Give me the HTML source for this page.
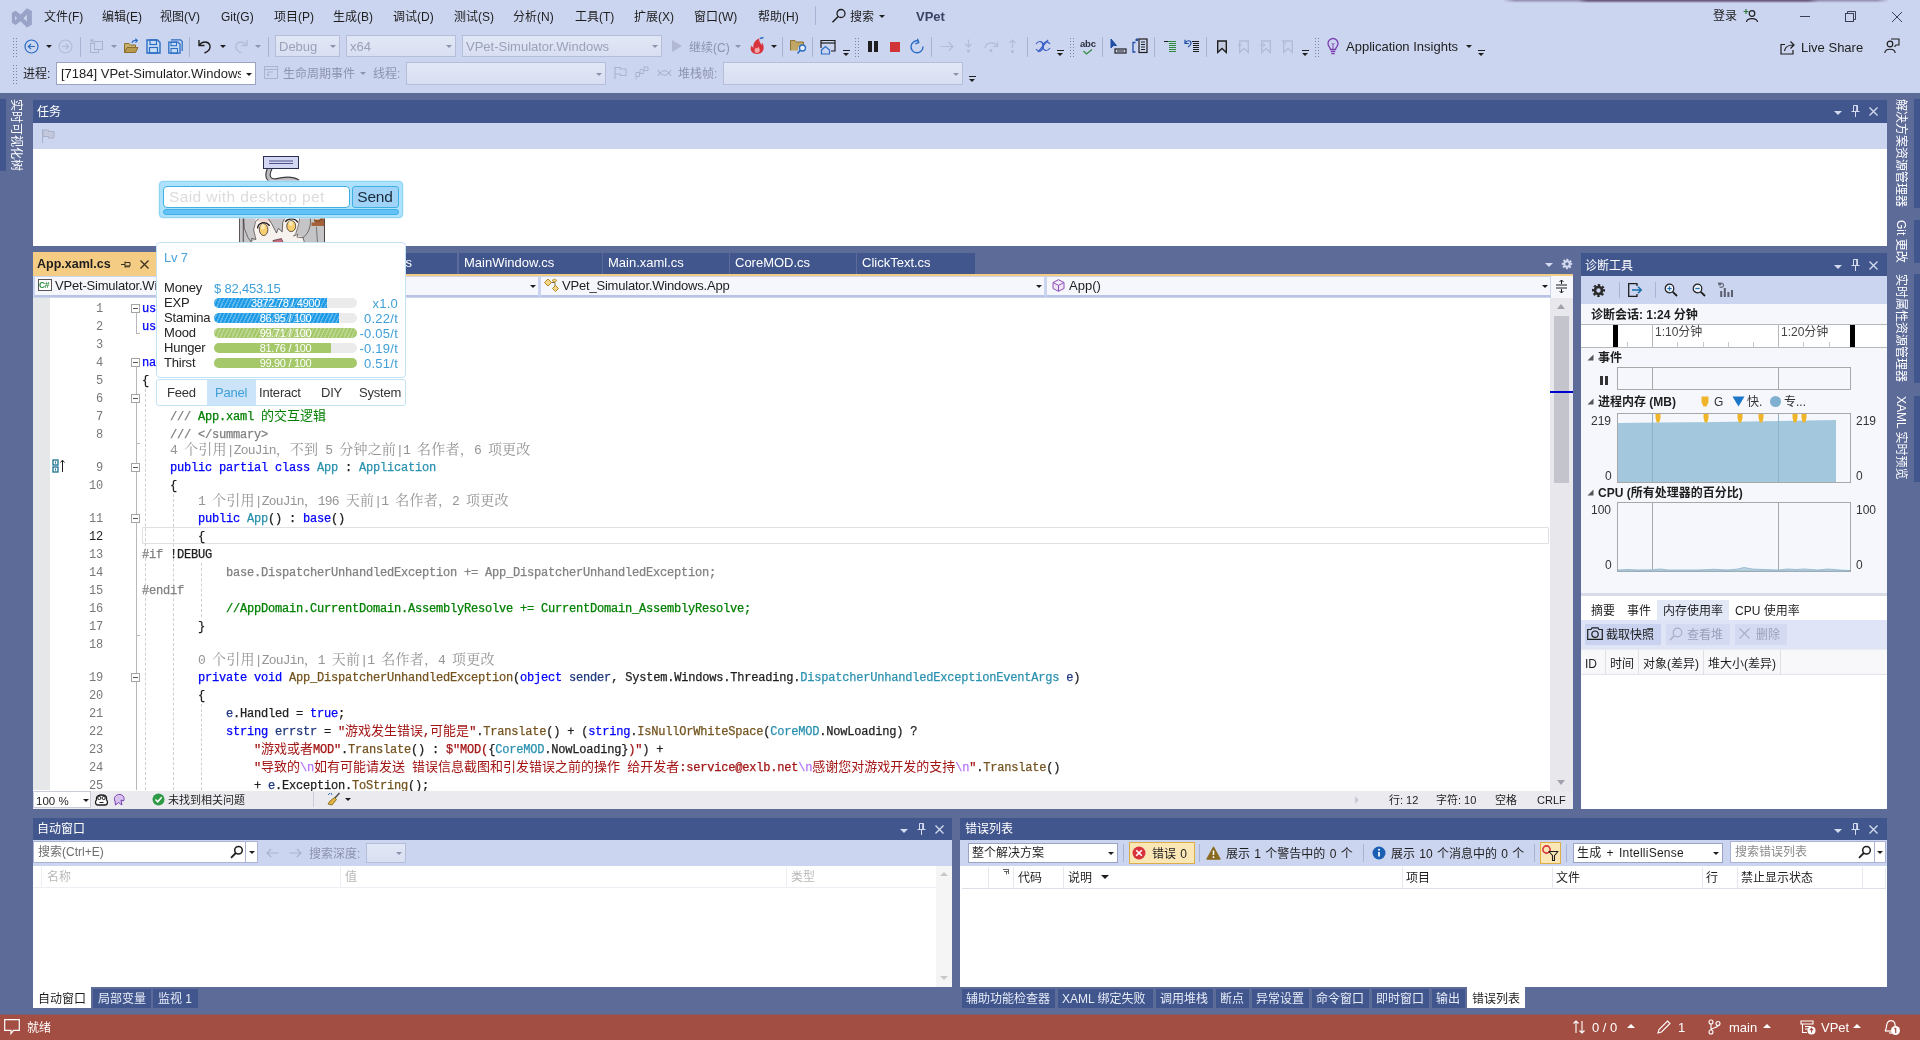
<!DOCTYPE html>
<html lang="zh-CN">
<head>
<meta charset="utf-8">
<title>VPet - Microsoft Visual Studio</title>
<style>
*{box-sizing:border-box;margin:0;padding:0}
html,body{width:1920px;height:1040px;overflow:hidden}
body{will-change:transform}
body{position:relative;background:#5d6b99;font-family:"Liberation Sans","Noto Sans CJK SC",sans-serif;font-size:12px;color:#1e1e1e;line-height:1}
.abs,.t{position:absolute}
.t{white-space:nowrap;line-height:16px;height:16px}
#top{position:absolute;left:0;top:0;width:1920px;height:93px;background:#ccd5f0}
.w{color:#fff}
.g{color:#8c93ad}
.ttl{position:absolute;background:#40568d;color:#fff}
.lt{position:absolute;background:#ccd5f0}
.wh{position:absolute;background:#fff}
.combo{position:absolute;background:#fff;border:1px solid #98a3c6;height:22px}
.combo.dis{background:linear-gradient(#e2e7f5,#d9dff2);border-color:#b4bedb}
.arr{position:absolute;width:0;height:0;border-left:3px solid transparent;border-right:3px solid transparent;border-top:3px solid #1e1e1e}
.arr.g{border-top-color:#8c93ad}
.arr.w{border-top-color:#d6dcf0}
.sep{position:absolute;width:1px;background:#a9b3d3}
.grip{position:absolute;width:3px;background-image:radial-gradient(circle,#7b84a8 0.7px,transparent 0.9px);background-size:3px 3px}
svg{position:absolute;overflow:visible}
/* code */
#code{position:absolute;left:33px;top:298px;width:1517px;height:493px;background:#fff;overflow:hidden;font-family:"Liberation Mono","Noto Sans CJK SC",monospace;font-size:12px;letter-spacing:-0.2px}
.ln{margin-top:1px;position:absolute;left:0;width:70px;text-align:right;color:#787878;height:18px;line-height:18px;white-space:pre}
.cl{-webkit-text-stroke:0.25px;margin-top:1px;position:absolute;left:109px;height:18px;line-height:18px;white-space:pre;color:#1e1e1e}
.lens{margin-top:2.5px;position:absolute;height:15px;line-height:15px;white-space:pre;color:#959595;font-family:"Liberation Mono","Noto Serif CJK SC",monospace;font-size:12px;letter-spacing:0}
.k{color:#0000ff}.ty{color:#2b91af}.cm{color:#008000}.gr{color:#808080}.st{color:#a31515}.fn{color:#74531f}.es{color:#b776fb}.lv{color:#1f377f}
.fold{position:absolute;width:9px;height:9px;border:1px solid #a5a5a5;background:#fff}
.fold:before{content:"";position:absolute;left:1px;top:3px;width:5px;height:1px;background:#555}
.cj{font-family:"Noto Sans CJK SC",sans-serif;font-size:13px;letter-spacing:0;line-height:0;-webkit-text-stroke:0}
.lens{font-size:13px;letter-spacing:-0.8px}
.lc{font-family:"Noto Serif CJK SC",serif;font-size:14px;letter-spacing:0.2px;line-height:0}
</style>
</head>
<body>
<div id="top"></div>
<!--MENU-->
<svg style="left:0;top:0" width="40" height="35" viewBox="0 0 640 560"><path d="M430 130 L510 175 V395 L430 440 L330 340 L250 400 L190 365 V205 L250 170 L330 230 Z M240 255 V325 L275 290 Z M430 235 L375 290 L430 345 Z" fill="#98a3c7" fill-rule="evenodd"/></svg>
<div class="t" style="left:44px;top:9px">文件(F)</div>
<div class="t" style="left:102px;top:9px">编辑(E)</div>
<div class="t" style="left:160px;top:9px">视图(V)</div>
<div class="t" style="left:221px;top:9px">Git(G)</div>
<div class="t" style="left:274px;top:9px">项目(P)</div>
<div class="t" style="left:333px;top:9px">生成(B)</div>
<div class="t" style="left:393px;top:9px">调试(D)</div>
<div class="t" style="left:454px;top:9px">测试(S)</div>
<div class="t" style="left:513px;top:9px">分析(N)</div>
<div class="t" style="left:575px;top:9px">工具(T)</div>
<div class="t" style="left:634px;top:9px">扩展(X)</div>
<div class="t" style="left:694px;top:9px">窗口(W)</div>
<div class="t" style="left:758px;top:9px">帮助(H)</div>
<div class="sep" style="left:815px;top:6px;height:19px"></div>
<svg style="left:831px;top:8px" width="16" height="16" viewBox="0 0 16 16"><circle cx="10" cy="5.5" r="4" fill="none" stroke="#1e1e1e" stroke-width="1.3"/><path d="M7.2 8.5 L1.5 14.2" stroke="#1e1e1e" stroke-width="1.5"/></svg>
<div class="t" style="left:850px;top:9px">搜索</div><div class="arr" style="left:879px;top:15px"></div>
<div class="t" style="left:916px;top:9px;font-weight:bold;color:#3b4263;font-size:13px">VPet</div>
<div class="t" style="left:1713px;top:8px">登录</div>
<svg style="left:1743px;top:8px" width="16" height="16" viewBox="0 0 16 16"><circle cx="9" cy="5.5" r="2.8" fill="none" stroke="#1e1e1e" stroke-width="1.2"/><path d="M3.5 14 C4 9.5 14 9.5 14.5 14" fill="none" stroke="#1e1e1e" stroke-width="1.2"/><path d="M3 1 V6 M0.5 3.5 H5.5" stroke="#2a7a3a" stroke-width="1.2"/></svg>
<div class="abs" style="left:1800px;top:16px;width:10px;height:1px;background:#3a3f55"></div>
<svg style="left:1845px;top:11px" width="12" height="12" viewBox="0 0 12 12"><rect x="0.5" y="2.5" width="8" height="8" fill="none" stroke="#3a3f55"/><path d="M2.5 2.5 V0.5 H10.5 V8.5 H8.5" fill="none" stroke="#3a3f55"/></svg>
<svg style="left:1892px;top:12px" width="10" height="10" viewBox="0 0 10 10"><path d="M0 0 L10 10 M10 0 L0 10" stroke="#3a3f55" stroke-width="1"/></svg>
<div class="abs" style="left:1503px;top:0;width:386px;height:3px;background:linear-gradient(to right,rgba(120,110,150,0),rgba(120,110,150,.75) 3%,rgba(120,110,150,.75) 97%,rgba(120,110,150,0));-webkit-mask-image:linear-gradient(#000,transparent);mask-image:linear-gradient(#000,transparent)"></div><div class="abs" style="left:1578px;top:0;width:240px;height:3px;background:linear-gradient(to right,rgba(95,75,110,0),rgba(95,75,110,.9) 4%,rgba(95,75,110,.9) 96%,rgba(95,75,110,0));-webkit-mask-image:linear-gradient(#000,transparent);mask-image:linear-gradient(#000,transparent)"></div>
<!--TOOLBAR1-->
<div class="grip" style="left:12px;top:37px;height:20px;width:6px"></div>
<svg style="left:24px;top:39px" width="15" height="15" viewBox="0 0 15 15"><circle cx="7.5" cy="7.5" r="6.5" fill="none" stroke="#2a6dc4" stroke-width="1.2"/><path d="M11 7.5 H4.5 M7 4.8 L4.3 7.5 L7 10.2" fill="none" stroke="#2a6dc4" stroke-width="1.2"/></svg>
<div class="arr" style="left:46px;top:45px"></div>
<svg style="left:58px;top:39px" width="15" height="15" viewBox="0 0 15 15"><circle cx="7.5" cy="7.5" r="6.5" fill="none" stroke="#b3bbd6" stroke-width="1.2"/><path d="M4 7.5 H10.5 M8 4.8 L10.7 7.5 L8 10.2" fill="none" stroke="#b3bbd6" stroke-width="1.2"/></svg>
<div class="sep" style="left:80px;top:37px;height:20px"></div>
<svg style="left:89px;top:38px" width="16" height="16" viewBox="0 0 16 16"><rect x="1.5" y="5.5" width="8" height="9" fill="none" stroke="#aab3d0"/><rect x="5.5" y="3.5" width="8" height="8" fill="#ccd5f0" stroke="#aab3d0"/><path d="M3 0.5 V5 M0.8 2.7 H5.2 M1.4 1.1 L4.6 4.3 M4.6 1.1 L1.4 4.3" stroke="#aab3d0" stroke-width="0.8"/></svg>
<div class="arr g" style="left:111px;top:45px"></div>
<svg style="left:123px;top:38px" width="17" height="16" viewBox="0 0 17 16"><path d="M1.5 14.5 V5.5 H6 L7.5 7 H12.5 V9" fill="#c9b06a" stroke="#8a6f2f"/><path d="M1.5 14.5 L4 9.5 H15 L12.5 14.5 Z" fill="#b89a4e" stroke="#8a6f2f"/><path d="M9 5 C9.5 2.5 12 2 14 2.5 M12.3 0.8 L14.3 2.6 L12.5 4.6" fill="none" stroke="#2a6dc4" stroke-width="1.2"/></svg>
<svg style="left:146px;top:39px" width="15" height="15" viewBox="0 0 15 15"><path d="M1 1 H11.5 L14 3.5 V14 H1 Z" fill="#c9ddf5" stroke="#2a6dc4" stroke-width="1.4"/><rect x="4" y="1" width="6.5" height="4.5" fill="none" stroke="#2a6dc4" stroke-width="1.2"/><rect x="3.5" y="8.5" width="8" height="5.5" fill="none" stroke="#2a6dc4" stroke-width="1.2"/></svg>
<svg style="left:168px;top:39px" width="15" height="15" viewBox="0 0 15 15"><path d="M3 0.8 H12.5 L14.2 2.5 V12" fill="none" stroke="#2a6dc4" stroke-width="1.2"/><path d="M0.8 3.2 H10 L12 5.2 V14.2 H0.8 Z" fill="#c9ddf5" stroke="#2a6dc4" stroke-width="1.3"/><rect x="3" y="3.2" width="5.5" height="3.5" fill="none" stroke="#2a6dc4" stroke-width="1.1"/><rect x="3" y="9.5" width="6.5" height="4.7" fill="none" stroke="#2a6dc4" stroke-width="1.1"/></svg>
<div class="sep" style="left:189px;top:37px;height:20px"></div>
<svg style="left:197px;top:39px" width="16" height="15" viewBox="0 0 16 15"><path d="M2 1 V6.5 H7.5" fill="none" stroke="#1e1e1e" stroke-width="1.4"/><path d="M2.3 6.2 C5 2 11 2 12.8 6 C14 9.5 11 12.5 7.5 14" fill="none" stroke="#1e1e1e" stroke-width="1.4"/></svg>
<div class="arr" style="left:220px;top:45px"></div>
<svg style="left:233px;top:39px" width="16" height="15" viewBox="0 0 16 15"><path d="M14 1 V6.5 H8.5" fill="none" stroke="#b3bbd6" stroke-width="1.3"/><path d="M13.7 6.2 C11 2 5 2 3.2 6 C2 9.5 5 12.5 8.5 14" fill="none" stroke="#b3bbd6" stroke-width="1.3"/></svg>
<div class="arr g" style="left:255px;top:45px"></div>
<div class="sep" style="left:268px;top:37px;height:20px"></div>
<div class="combo dis" style="left:275px;top:35px;width:65px;height:22px"><div class="t" style="left:3px;top:3px;font-size:13px;color:#9aa1bb">Debug</div><div class="arr g" style="left:54px;top:9px"></div></div>
<div class="combo dis" style="left:346px;top:35px;width:110px;height:22px"><div class="t" style="left:3px;top:3px;font-size:13px;color:#9aa1bb">x64</div><div class="arr g" style="left:99px;top:9px"></div></div>
<div class="combo dis" style="left:462px;top:35px;width:200px;height:22px"><div class="t" style="left:3px;top:3px;font-size:13px;color:#9aa1bb">VPet-Simulator.Windows</div><div class="arr g" style="left:189px;top:9px"></div></div>
<svg style="left:671px;top:39px" width="12" height="14" viewBox="0 0 12 14"><path d="M1 1 L11 7 L1 13 Z" fill="#b0b8d4"/></svg>
<div class="t g" style="left:689px;top:40px">继续(C)</div><div class="arr g" style="left:735px;top:45px"></div>
<svg style="left:748px;top:37px" width="18" height="18" viewBox="0 0 18 18"><path d="M9 17 C3 17 1.5 12 3.5 8.5 C4 10 5 10.5 5.5 10.5 C4.5 6 8 3 11.5 1 C10.5 4 12 5.5 13.5 8 C14 7 14 6 13.8 5.2 C17 9 16.5 17 9 17 Z" fill="#d8323c"/><path d="M9 16 C6 16 6 12.5 8 10.5 C8.5 12 10 11.5 10 9.5 C12.5 12 12.5 16 9 16 Z" fill="#f4a8a8"/><path d="M12 1.5 L15.5 0.5" stroke="#2a6dc4" stroke-width="1.5"/></svg>
<div class="arr" style="left:771px;top:45px"></div>
<div class="sep" style="left:782px;top:37px;height:20px"></div>
<svg style="left:790px;top:39px" width="18" height="16" viewBox="0 0 18 16"><path d="M0.5 11.5 V1.5 H5 L6.5 3 H13.5 V6" fill="#bfa664" stroke="#8a7238"/><path d="M0.5 11.5 H8 V5 H13.5" fill="#bfa664" stroke="#8a7238" stroke-width="0"/><circle cx="12.5" cy="9" r="3" fill="#e8eefc" stroke="#2a6dc4" stroke-width="1.3"/><path d="M10.3 11.2 L7.5 14.5" stroke="#2a6dc4" stroke-width="1.6"/></svg>
<div class="sep" style="left:812px;top:37px;height:20px"></div>
<svg style="left:820px;top:39px" width="17" height="16" viewBox="0 0 17 16"><path d="M1 9 V1.5 H15 V12 H11" fill="none" stroke="#1e1e1e" stroke-width="1.2"/><path d="M1 4 H15" stroke="#1e1e1e" stroke-width="1.2"/><path d="M1.5 11 L5.5 7.5 L9.5 11 V15 H1.5 Z" fill="none" stroke="#2a6dc4" stroke-width="1.2"/></svg>
<div class="abs" style="left:843px;top:50px;width:7px;height:1px;background:#1e1e1e"></div><div class="arr" style="left:843px;top:53px;border-left-width:3.5px;border-right-width:3.5px"></div>
<div class="grip" style="left:854px;top:37px;height:20px;width:6px"></div>
<div class="abs" style="left:868px;top:41px;width:4px;height:11px;background:#1e1e1e"></div><div class="abs" style="left:874px;top:41px;width:4px;height:11px;background:#1e1e1e"></div>
<div class="abs" style="left:890px;top:42px;width:10px;height:10px;background:#d13438"></div>
<svg style="left:909px;top:38px" width="16" height="17" viewBox="0 0 16 17"><path d="M9.5 3 A6 6 0 1 0 14 8.5" fill="none" stroke="#2a6dc4" stroke-width="1.4"/><path d="M9.8 0.5 V4.5 H6" fill="none" stroke="#2a6dc4" stroke-width="1.3" transform="rotate(-20 9.8 4.5)"/></svg>
<div class="sep" style="left:931px;top:37px;height:20px"></div>
<svg style="left:940px;top:40px" width="15" height="13" viewBox="0 0 15 13"><path d="M0.5 6.5 H13 M8.5 2 L13 6.5 L8.5 11" fill="none" stroke="#b3bbd6" stroke-width="1.2"/></svg>
<svg style="left:963px;top:39px" width="11" height="15" viewBox="0 0 11 15"><path d="M5.5 0.5 V8 M2.5 5 L5.5 8 L8.5 5" fill="none" stroke="#b3bbd6" stroke-width="1.2"/><circle cx="5.5" cy="12" r="1.5" fill="#b3bbd6"/></svg>
<svg style="left:984px;top:40px" width="15" height="13" viewBox="0 0 15 13"><path d="M1 8 C2 2 10 1 13 6 M13.5 2 V6.5 H9" fill="none" stroke="#b3bbd6" stroke-width="1.2"/><circle cx="7" cy="10.5" r="1.5" fill="#b3bbd6"/></svg>
<svg style="left:1007px;top:39px" width="11" height="15" viewBox="0 0 11 15"><path d="M5.5 9 V1 M2.5 4 L5.5 1 L8.5 4" fill="none" stroke="#b3bbd6" stroke-width="1.2"/><circle cx="5.5" cy="12.5" r="1.5" fill="#b3bbd6"/></svg>
<div class="sep" style="left:1027px;top:37px;height:20px"></div>
<svg style="left:1035px;top:39px" width="16" height="15" viewBox="0 0 16 15"><path d="M1 5 C4 1 8 2 8 7 C8 12 12 13 15 9" fill="none" stroke="#3a5fc8" stroke-width="1.2"/><path d="M1 10 C4 14 8 12 8 7 C8 3 12 1 15 5" fill="none" stroke="#3a5fc8" stroke-width="1.2"/><path d="M3 13 L13 1" stroke="#3a5fc8" stroke-width="1.2"/></svg>
<div class="abs" style="left:1057px;top:50px;width:7px;height:1px;background:#1e1e1e"></div><div class="arr" style="left:1057px;top:53px;border-left-width:3.5px;border-right-width:3.5px"></div>
<div class="grip" style="left:1069px;top:37px;height:20px;width:6px"></div>
<div class="t" style="left:1080px;top:36px;font-size:9.5px;font-weight:bold;letter-spacing:-0.2px;color:#2a2d3e">abc</div><svg style="left:1083px;top:49px" width="10" height="6" viewBox="0 0 10 6"><path d="M0.5 2 L3.5 5 L9 0.5" fill="none" stroke="#2f8a3d" stroke-width="1.2"/></svg>
<div class="sep" style="left:1102px;top:37px;height:20px"></div>
<svg style="left:1110px;top:38px" width="17" height="16" viewBox="0 0 17 16"><path d="M1 1 L1 10 L3.5 7.5 L6.5 7.5 Z" fill="#1f4ea3" stroke="#1f4ea3"/><rect x="5" y="11" width="11" height="4" fill="none" stroke="#1e1e1e" stroke-width="1.2"/><path d="M7 13 H14" stroke="#1e1e1e"/></svg>
<svg style="left:1132px;top:38px" width="17" height="16" viewBox="0 0 17 16"><path d="M3.5 4.5 H1 V14 H3.5" fill="none" stroke="#1f4ea3" stroke-width="1.3"/><path d="M4 1 L6 3 M6 1 L4 3 L4 1 H6.5" fill="none" stroke="#1f4ea3" stroke-width="1"/><rect x="7" y="1" width="8" height="13.5" fill="none" stroke="#1e1e1e" stroke-width="1.2"/><path d="M9 4 H13 M9 6.5 H13 M9 9 H13 M9 11.5 H13" stroke="#1e1e1e"/></svg>
<div class="sep" style="left:1154px;top:37px;height:20px"></div>
<svg style="left:1163px;top:40px" width="14" height="13" viewBox="0 0 14 13" shape-rendering="crispEdges"><path d="M1 1.500 H5" stroke="#1e1e1e" stroke-width="1"/><path d="M5 1.500 H13 M6 3.500 H13 M6 5.500 H13 M6 7.500 H13 M6 9.500 H13 M6 11.500 H13" stroke="#2f8a3d" stroke-width="1"/></svg>
<svg style="left:1184px;top:39px" width="16" height="14" viewBox="0 0 16 14"><path d="M8 2.500 H15 M9 4.500 H15 M9 6.500 H15 M9 8.500 H15 M9 10.500 H15 M9 12.500 H15" stroke="#1e1e1e" stroke-width="1" shape-rendering="crispEdges"/><path d="M1 0.800 V4.500 H4.800 M1.500 4 C2.500 1 7 1 7 4.200 C7 6.200 5.500 7 4 8" fill="none" stroke="#1f4ea3" stroke-width="1.200"/></svg>
<div class="sep" style="left:1206px;top:37px;height:20px"></div>
<svg style="left:1216px;top:40px" width="13" height="14" viewBox="0 0 13 14"><path d="M1.700 1 H10.300 V12.500 L6 8.500 L1.700 12.500 Z" fill="#c3cbe0" stroke="#1e1e1e" stroke-width="1.400"/></svg>
<svg style="left:1238px;top:40px" width="13" height="14" viewBox="0 0 13 14"><path d="M1.7 1 H10.3 V12.5 L6 8.5 L1.7 12.5 Z" fill="none" stroke="#b3bbd6" stroke-width="1.4"/><path d="M0 5 H4 M2 3 L0 5 L2 7" fill="none" stroke="#b3bbd6"/></svg>
<svg style="left:1260px;top:40px" width="13" height="14" viewBox="0 0 13 14"><path d="M1.7 1 H10.3 V12.5 L6 8.5 L1.7 12.5 Z" fill="none" stroke="#b3bbd6" stroke-width="1.4"/><path d="M0 5 H5 M3 3 L5 5 L3 7" fill="none" stroke="#b3bbd6"/></svg>
<svg style="left:1282px;top:40px" width="13" height="14" viewBox="0 0 13 14"><path d="M1.7 1 H10.3 V12.5 L6 8.5 L1.7 12.5 Z" fill="none" stroke="#b3bbd6" stroke-width="1.4"/><path d="M-0.5 0 L4 4" stroke="#b3bbd6"/></svg>
<div class="abs" style="left:1302px;top:50px;width:7px;height:1px;background:#1e1e1e"></div><div class="arr" style="left:1302px;top:53px;border-left-width:3.5px;border-right-width:3.5px"></div>
<div class="grip" style="left:1314px;top:37px;height:20px;width:6px"></div>
<svg style="left:1327px;top:38px" width="12" height="17" viewBox="0 0 12 17"><path d="M3.5 11.5 C3.5 9.5 1 8.5 1 5.5 A5 5 0 0 1 11 5.5 C11 8.5 8.5 9.5 8.5 11.5 Z" fill="none" stroke="#7a3fb0" stroke-width="1.3"/><path d="M3.8 13.5 H8.2 M4.3 15.7 H7.7" stroke="#7a3fb0" stroke-width="1.3"/><path d="M6 11 V6 M4.5 5 L6 6.5 L7.5 5" fill="none" stroke="#7a3fb0" stroke-width="0.9"/></svg>
<div class="t" style="left:1346px;top:39px;font-size:13px">Application Insights</div><div class="arr" style="left:1466px;top:45px"></div>
<div class="abs" style="left:1478px;top:50px;width:7px;height:1px;background:#1e1e1e"></div><div class="arr" style="left:1478px;top:53px;border-left-width:3.5px;border-right-width:3.5px"></div>
<svg style="left:1780px;top:40px" width="15" height="15" viewBox="0 0 15 15"><path d="M5 4.5 H1 V14 H13 V10" fill="none" stroke="#1e1e1e" stroke-width="1.2"/><path d="M4.5 11 C5 7 8 5 13.5 5 M10.5 1.5 L14 5 L10.5 8.5" fill="none" stroke="#1e1e1e" stroke-width="1.2"/></svg>
<div class="t" style="left:1801px;top:40px;font-size:13px">Live Share</div>
<svg style="left:1884px;top:38px" width="16" height="16" viewBox="0 0 16 16"><circle cx="6" cy="6" r="2.8" fill="none" stroke="#1e1e1e" stroke-width="1.2"/><path d="M0.8 15 C1.2 10 10.8 10 11.2 15" fill="none" stroke="#1e1e1e" stroke-width="1.2"/><path d="M7 1 H15 V7 H12 L10.5 8.8" fill="none" stroke="#1e1e1e" stroke-width="1.1"/></svg>
<!--TOOLBAR2-->
<div class="grip" style="left:12px;top:64px;height:20px;width:6px"></div>
<div class="t" style="left:23px;top:66px">进程:</div>
<div class="combo" style="left:56px;top:62px;width:200px;height:23px"><div class="t" style="left:4px;top:3px;font-size:13px;width:180px;overflow:hidden">[7184] VPet-Simulator.Windows.exe</div><div class="arr" style="left:189px;top:10px"></div></div>
<svg style="left:264px;top:66px" width="14" height="13" viewBox="0 0 14 13"><rect x="0.5" y="0.5" width="13" height="12" fill="none" stroke="#aab3d0"/><path d="M0.5 3.5 H13.5 M9 6 H4 V10 M2.5 8.5 L4 10 L5.5 8.5" fill="none" stroke="#aab3d0"/></svg>
<div class="t g" style="left:283px;top:66px">生命周期事件</div><div class="arr g" style="left:360px;top:72px"></div>
<div class="t g" style="left:373px;top:66px">线程:</div>
<div class="combo dis" style="left:406px;top:62px;width:200px;height:23px"><div class="arr g" style="left:189px;top:10px"></div></div>
<svg style="left:614px;top:66px" width="14" height="14" viewBox="0 0 14 14"><path d="M1 0.5 V13 M1 1.5 H6.5 V3 H12 V9.5 H6.5 V8 H1" fill="none" stroke="#aab3d0" stroke-width="1.1"/></svg>
<svg style="left:635px;top:66px" width="14" height="14" viewBox="0 0 14 14"><path d="M1 6 V13.5 M1 6.5 H4.5 V10.5 H1 M5 3.5 V8 M5 3.5 H8.5 V7.5 H5 M9 0.5 V5 M9 1 H13 V4.5 H9" fill="none" stroke="#aab3d0" stroke-width="1"/></svg>
<svg style="left:657px;top:68px" width="15" height="10" viewBox="0 0 15 10"><path d="M1 2 C5 9 10 9 14 2 M1 8 C5 1 10 1 14 8" fill="none" stroke="#aab3d0" stroke-width="1.1"/></svg>
<div class="t g" style="left:678px;top:66px">堆栈帧:</div>
<div class="combo dis" style="left:723px;top:62px;width:240px;height:23px"><div class="arr g" style="left:229px;top:10px"></div></div>
<div class="abs" style="left:969px;top:76px;width:7px;height:1px;background:#1e1e1e"></div><div class="arr" style="left:969px;top:79px;border-left-width:3.5px;border-right-width:3.5px"></div>
<!--LEFTSTRIP-->
<div class="abs" style="left:0;top:99px;width:6px;height:72px;background:#40568d"></div>
<div class="abs" style="left:7.5px;top:99px;width:16px;height:72px"><div style="position:absolute;left:16px;top:0;transform-origin:0 0;transform:rotate(90deg);white-space:nowrap;line-height:16px;height:16px;color:#fff">实时可视化树</div></div>
<!--TASK-->
<div class="ttl" style="left:33px;top:100px;width:1854px;height:23px"><div class="t" style="left:4px;top:4px">任务</div></div>
<div class="arr w" style="left:1834px;top:111px;border-left-width:4px;border-right-width:4px;border-top-width:4px;border-top-color:#d6dcf0"></div><svg style="left:1851px;top:105px" width="9" height="13" viewBox="0 0 9 13"><path d="M2.5 0.5 H6.5 V6.5 H2.5 Z M0.5 6.5 H8.5 M4.5 6.5 V12" fill="none" stroke="#d6dcf0" stroke-width="1"/><path d="M6 0.5 V6.5" stroke="#d6dcf0" stroke-width="1.6"/></svg><svg style="left:1869px;top:107px" width="9" height="9" viewBox="0 0 9 9"><path d="M0.5 0.5 L8.5 8.5 M8.5 0.5 L0.5 8.5" stroke="#d6dcf0" stroke-width="1.3"/></svg>
<div class="lt" style="left:33px;top:123px;width:1854px;height:26px"></div>
<svg style="left:42px;top:129px" width="13" height="15" viewBox="0 0 13 15"><path d="M0.5 0.5 V14" stroke="#a9b0c8"/><path d="M1 1 H6.5 V2.5 H12 V9 H6.5 V7.5 H1 Z" fill="#c3c8dc" stroke="#a9b0c8"/></svg>
<div class="wh" style="left:33px;top:149px;width:1854px;height:97px"></div>
<!--EDITOR-->
<div class="abs" style="left:33px;top:252px;width:124px;height:24px;background:#f5cc84"><div class="t" style="left:4px;top:4px;font-weight:bold;font-size:12.5px;color:#1e1e1e">App.xaml.cs</div><svg style="left:88px;top:8px" width="10" height="9" viewBox="0 0 10 9"><path d="M0 4.5 H4 M4 1.5 V7.5 M4 2.5 H9 V6 H4 M4 6.8 H9" fill="none" stroke="#3b3221" stroke-width="1"/></svg><svg style="left:107px;top:8px" width="9" height="9" viewBox="0 0 9 9"><path d="M0.5 0.5 L8.5 8.5 M8.5 0.5 L0.5 8.5" stroke="#3b3221" stroke-width="1.3"/></svg></div>
<div class="ttl" style="left:158px;top:253px;width:299px;height:21px"><div class="t" style="left:auto;right:45px;top:2px;font-size:13px">MODs.cs</div></div>
<div class="ttl" style="left:459px;top:253px;width:143px;height:21px"><div class="t" style="left:5px;top:2px;font-size:13px">MainWindow.cs</div></div>
<div class="ttl" style="left:603px;top:253px;width:126px;height:21px"><div class="t" style="left:5px;top:2px;font-size:13px">Main.xaml.cs</div></div>
<div class="ttl" style="left:730px;top:253px;width:126px;height:21px"><div class="t" style="left:5px;top:2px;font-size:13px">CoreMOD.cs</div></div>
<div class="ttl" style="left:857px;top:253px;width:118px;height:21px"><div class="t" style="left:5px;top:2px;font-size:13px">ClickText.cs</div></div>
<div class="abs" style="left:33px;top:274px;width:1540px;height:2px;background:#f5cc84"></div>
<div class="arr w" style="left:1545px;top:263px;border-left-width:4px;border-right-width:4px;border-top-width:4px"></div>
<svg style="left:1561px;top:258px" width="12" height="12" viewBox="0 0 16 16"><circle cx="8" cy="8" r="3.7" fill="none" stroke="#d6dcf0" stroke-width="2.8"/><circle cx="8" cy="8" r="5.6" fill="none" stroke="#d6dcf0" stroke-width="2.8" stroke-dasharray="2.4 1.998" transform="rotate(-14 8 8)"/></svg>
<div class="abs" style="left:33px;top:276px;width:1540px;height:22px;background:#ccd5f0"></div>
<div class="abs" style="left:34px;top:276px;width:505px;height:21px;background:#f5f7fc;border:1px solid #ccd5f0;border-bottom:2px solid #b9c3e3"><svg style="left:3px;top:2px" width="14" height="12" viewBox="0 0 14 12"><rect x="0.5" y="0.5" width="13" height="11" fill="#fff" stroke="#555"/></svg><div class="t" style="left:4px;top:0px;font-size:8.5px;font-weight:bold;color:#2f8a3d;letter-spacing:-0.5px">C#</div><div class="t" style="left:20px;top:1px;font-size:13px;letter-spacing:-0.2px">VPet-Simulator.Windows</div><div class="arr" style="left:495px;top:8px"></div></div>
<div class="abs" style="left:540px;top:276px;width:505px;height:21px;background:#f5f7fc;border:1px solid #ccd5f0;border-bottom:2px solid #b9c3e3"><svg style="left:3px;top:1px" width="16" height="15" viewBox="0 0 16 15"><path d="M4 1 L7.5 4.5 L4 8 L0.5 4.5 Z" fill="#f3d68a" stroke="#b58a1c" stroke-width="1"/><path d="M7.5 4.5 H11 V9" fill="none" stroke="#7a6a3a"/><path d="M11.5 7.5 L14.5 10.5 L11.5 13.5 L8.5 10.5 Z" fill="#f3d68a" stroke="#b58a1c"/><path d="M8 2.5 L10.5 1 L13 2.5 L10.5 4 Z" fill="#f3d68a" stroke="#b58a1c" stroke-width="0.8"/></svg><div class="t" style="left:21px;top:1px;font-size:13px;letter-spacing:-0.2px">VPet_Simulator.Windows.App</div><div class="arr" style="left:495px;top:8px"></div></div>
<div class="abs" style="left:1046px;top:276px;width:505px;height:21px;background:#f5f7fc;border:1px solid #ccd5f0;border-bottom:2px solid #b9c3e3"><svg style="left:5px;top:2px" width="13" height="13" viewBox="0 0 13 13"><path d="M6.5 0.7 L12 3.5 V9.5 L6.5 12.3 L1 9.5 V3.5 Z M1 3.5 L6.5 6.3 L12 3.5 M6.5 6.3 V12.3" fill="#f0e4f8" stroke="#8b4fb8" stroke-width="1" stroke-linejoin="round"/></svg><div class="t" style="left:22px;top:1px;font-size:13px">App()</div><div class="arr" style="left:495px;top:8px"></div></div>
<div class="abs" style="left:1551px;top:276px;width:22px;height:22px;background:#f5f7fc"></div><svg style="left:1556px;top:280px" width="11" height="13" viewBox="0 0 11 13"><path d="M0 5 H11 M0 8 H11 M5.5 0 V4 M5.5 9 V13 M3.5 2 L5.5 0 L7.5 2 M3.5 11 L5.5 13 L7.5 11" fill="none" stroke="#1e1e1e" stroke-width="1"/></svg>
<div id="code">
<div class="abs" style="left:0;top:0;width:17px;height:492px;background:#e6e7e8"></div>
<div class="abs" style="left:109px;top:229px;width:1407px;height:17px;border:1px solid #e0e0e4;border-radius:1px"></div>
<div class="abs" style="left:112px;top:91px;width:0;height:401px;border-left:1px dashed #d0d0d0"></div>
<div class="abs" style="left:140px;top:196px;width:0;height:296px;border-left:1px dashed #d0d0d0"></div>
<div class="abs" style="left:168px;top:265px;width:0;height:54px;border-left:1px dashed #d0d0d0"></div>
<div class="abs" style="left:168px;top:406px;width:0;height:86px;border-left:1px dashed #d0d0d0"></div>
<div class="abs" style="left:103px;top:15px;width:1px;height:20px;background:#b8b8b8"></div>
<div class="abs" style="left:103px;top:35px;width:4px;height:1px;background:#b8b8b8"></div>
<div class="abs" style="left:103px;top:69px;width:1px;height:423px;background:#b8b8b8"></div>
<div class="abs" style="left:103px;top:145px;width:4px;height:1px;background:#b8b8b8"></div>
<div class="abs" style="left:103px;top:337px;width:4px;height:1px;background:#b8b8b8"></div>
<div class="fold" style="left:98px;top:6px"></div>
<div class="fold" style="left:98px;top:60px"></div>
<div class="fold" style="left:98px;top:96px"></div>
<div class="fold" style="left:98px;top:165px"></div>
<div class="fold" style="left:98px;top:216px"></div>
<div class="fold" style="left:98px;top:375px"></div>
<div class="ln" style="top:1px">1</div><div class="cl" style="top:1px"><span class="k">using</span> System;</div>
<div class="ln" style="top:19px">2</div><div class="cl" style="top:19px"><span class="k">using</span> System.Windows;</div>
<div class="ln" style="top:37px">3</div>
<div class="ln" style="top:55px">4</div><div class="cl" style="top:55px"><span class="k">namespace</span> VPet_Simulator.Windows</div>
<div class="ln" style="top:73px">5</div><div class="cl" style="top:73px">{</div>
<div class="ln" style="top:91px">6</div><div class="cl" style="top:91px"><span class="gr">    /// &lt;summary&gt;</span></div>
<div class="ln" style="top:109px">7</div><div class="cl" style="top:109px"><span class="gr">    /// </span><span class="cm">App.xaml <span class="cj">的交互逻辑</span></span></div>
<div class="ln" style="top:127px">8</div><div class="cl" style="top:127px"><span class="gr">    /// &lt;/summary&gt;</span></div>
<div class="ln" style="top:160px">9</div><div class="cl" style="top:160px"><span class="k">    public partial class </span><span class="ty">App</span> : <span class="ty">Application</span></div>
<div class="ln" style="top:178px">10</div><div class="cl" style="top:178px">    {</div>
<div class="ln" style="top:211px">11</div><div class="cl" style="top:211px"><span class="k">        public </span><span class="ty">App</span>() : <span class="k">base</span>()</div>
<div class="ln" style="top:229px;color:#1e1e1e">12</div><div class="cl" style="top:229px">        {</div>
<div class="ln" style="top:247px">13</div><div class="cl" style="top:247px"><span class="gr">#if</span> !DEBUG</div>
<div class="ln" style="top:265px">14</div><div class="cl" style="top:265px"><span class="gr">            base.DispatcherUnhandledException += App_DispatcherUnhandledException;</span></div>
<div class="ln" style="top:283px">15</div><div class="cl" style="top:283px"><span class="gr">#endif</span></div>
<div class="ln" style="top:301px">16</div><div class="cl" style="top:301px"><span class="cm">            //AppDomain.CurrentDomain.AssemblyResolve += CurrentDomain_AssemblyResolve;</span></div>
<div class="ln" style="top:319px">17</div><div class="cl" style="top:319px">        }</div>
<div class="ln" style="top:337px">18</div>
<div class="ln" style="top:370px">19</div><div class="cl" style="top:370px"><span class="k">        private void </span><span class="fn">App_DispatcherUnhandledException</span>(<span class="k">object</span><span class="lv"> sender</span>, System.Windows.Threading.<span class="ty">DispatcherUnhandledExceptionEventArgs</span><span class="lv"> e</span>)</div>
<div class="ln" style="top:388px">20</div><div class="cl" style="top:388px">        {</div>
<div class="ln" style="top:406px">21</div><div class="cl" style="top:406px"><span class="lv">            e</span>.Handled = <span class="k">true</span>;</div>
<div class="ln" style="top:424px">22</div><div class="cl" style="top:424px"><span class="k">            string </span><span class="lv">errstr</span> = <span class="st">"<span class="cj">游戏发生错误</span>,<span class="cj">可能是</span>"</span>.<span class="fn">Translate</span>() + (<span class="k">string</span>.<span class="fn">IsNullOrWhiteSpace</span>(<span class="ty">CoreMOD</span>.NowLoading) ?</div>
<div class="ln" style="top:442px">23</div><div class="cl" style="top:442px"><span class="st">                "<span class="cj">游戏或者</span>MOD"</span>.<span class="fn">Translate</span>() : <span class="st">$"MOD(</span>{<span class="ty">CoreMOD</span>.NowLoading}<span class="st">)"</span>) +</div>
<div class="ln" style="top:460px">24</div><div class="cl" style="top:460px"><span class="st">                "<span class="cj">导致的</span></span><span class="es">\n</span><span class="st"><span class="cj">如有可能请发送</span> <span class="cj">错误信息截图和引发错误之前的操作</span> <span class="cj">给开发者</span>:service@exlb.net</span><span class="es">\n</span><span class="st"><span class="cj">感谢您对游戏开发的支持</span></span><span class="es">\n</span><span class="st">"</span>.<span class="fn">Translate</span>()</div>
<div class="ln" style="top:478px">25</div><div class="cl" style="top:478px">                + <span class="lv">e</span>.Exception.<span class="fn">ToString</span>();</div>
<div class="lens" style="left:137px;top:142px">4 <span class="lc">个引用</span>|ZouJin<span class="lc">，不到</span> 5 <span class="lc">分钟之前</span>|1 <span class="lc">名作者，</span>6 <span class="lc">项更改</span></div>
<div class="lens" style="left:165px;top:193px">1 <span class="lc">个引用</span>|ZouJin<span class="lc">，</span>196 <span class="lc">天前</span>|1 <span class="lc">名作者，</span>2 <span class="lc">项更改</span></div>
<div class="lens" style="left:165px;top:352px">0 <span class="lc">个引用</span>|ZouJin<span class="lc">，</span>1 <span class="lc">天前</span>|1 <span class="lc">名作者，</span>4 <span class="lc">项更改</span></div>
<svg style="left:19px;top:161px" width="14" height="14" viewBox="0 0 14 14"><rect x="1" y="1" width="5" height="5" fill="none" stroke="#1b6f8f" stroke-width="1.3"/><rect x="1" y="8" width="5" height="5" fill="none" stroke="#1b6f8f" stroke-width="1.3"/><path d="M3.5 2.5 V4.5 M3.5 9.5 V11.5" stroke="#1b6f8f"/><path d="M10.5 13 V1.5 M8.5 3.5 L10.5 1.2 L12.5 3.5" fill="none" stroke="#1e1e1e" stroke-width="1"/></svg>
</div>
<div class="abs" style="left:1550px;top:298px;width:23px;height:493px;background:#e8e8ec"></div>
<div class="abs" style="left:1554px;top:316px;width:15px;height:167px;background:#c4c5cc"></div>
<div class="abs" style="left:1550px;top:391px;width:23px;height:2px;background:#0000cd"></div>
<div class="arr" style="left:1557px;top:304px;border-top:0;border-bottom:5px solid #a0a3ad;border-left-width:4.5px;border-right-width:4.5px"></div>
<div class="arr" style="left:1557px;top:780px;border-top:5px solid #a0a3ad;border-left-width:4.5px;border-right-width:4.5px"></div>
<div class="abs" style="left:33px;top:791px;width:1540px;height:18px;background:#ebebef"></div>
<div class="abs" style="left:33px;top:791px;width:58px;height:17px;background:#fff;border:1px solid #c8ccd8"><div class="t" style="left:2px;top:1px;font-size:11.5px">100 %</div><div class="arr" style="left:49px;top:7px"></div></div>
<svg style="left:95px;top:793px" width="13" height="13" viewBox="0 0 13 13"><path d="M1.5 5 C1.5 1 11.5 1 11.5 5 V7 C13 8 13 12 10 12 H3 C0 12 0 8 1.5 7 Z" fill="#fff" stroke="#1e1e1e" stroke-width="1.3"/><circle cx="4.3" cy="5" r="1.6" fill="none" stroke="#1e1e1e"/><circle cx="8.7" cy="5" r="1.6" fill="none" stroke="#1e1e1e"/><path d="M4.5 9.5 H8.5" stroke="#1e1e1e"/></svg>
<svg style="left:112px;top:793px" width="14" height="13" viewBox="0 0 14 13"><path d="M3 8 C1 5 4 1 8 1.5 C11.5 2 13 5 11.5 8 L9 7 L10 12 L6.5 9.5 L3.5 12 Z" fill="#d8c3f0" stroke="#7a3fb0" stroke-width="1"/></svg>
<svg style="left:152px;top:793px" width="13" height="13" viewBox="0 0 13 13"><circle cx="6.5" cy="6.5" r="6" fill="#2f9a45"/><path d="M3.5 6.5 L5.7 8.8 L9.7 4.3" fill="none" stroke="#fff" stroke-width="1.5"/></svg>
<div class="t" style="left:168px;top:792px;font-size:11px">未找到相关问题</div>
<div class="sep" style="left:313px;top:792px;height:15px;background:#c8ccd8"></div>
<svg style="left:327px;top:792px" width="14" height="14" viewBox="0 0 14 14"><path d="M12.5 1 L7 7" stroke="#555" stroke-width="1.6"/><path d="M7.5 5.5 L9.5 7.5 L5 13 L1 12 L3 9 Z" fill="#e3b341" stroke="#7a5a10" stroke-width="0.8"/><path d="M1 3 L3 1 M4 1 L5 3" stroke="#2a6dc4"/></svg>
<div class="arr" style="left:345px;top:798px"></div>
<div class="arr" style="left:1355px;top:796px;border:0;border-top:4px solid transparent;border-bottom:4px solid transparent;border-left:4px solid #c9ccd6"></div>
<div class="t" style="left:1389px;top:792px;font-size:11px">行: 12</div>
<div class="t" style="left:1436px;top:792px;font-size:11px">字符: 10</div>
<div class="t" style="left:1495px;top:792px;font-size:11px">空格</div>
<div class="t" style="left:1537px;top:792px;font-size:11px">CRLF</div>
<!--DIAG-->
<div class="ttl" style="left:1581px;top:253px;width:306px;height:23px"><div class="t" style="left:4px;top:5px">诊断工具</div></div>
<div class="arr w" style="left:1834px;top:265px;border-left-width:4px;border-right-width:4px;border-top-width:4px;border-top-color:#d6dcf0"></div><svg style="left:1851px;top:259px" width="9" height="13" viewBox="0 0 9 13"><path d="M2.5 0.5 H6.5 V6.5 H2.5 Z M0.5 6.5 H8.5 M4.5 6.5 V12" fill="none" stroke="#d6dcf0" stroke-width="1"/><path d="M6 0.5 V6.5" stroke="#d6dcf0" stroke-width="1.6"/></svg><svg style="left:1869px;top:261px" width="9" height="9" viewBox="0 0 9 9"><path d="M0.5 0.5 L8.5 8.5 M8.5 0.5 L0.5 8.5" stroke="#d6dcf0" stroke-width="1.3"/></svg>
<div class="lt" style="left:1581px;top:276px;width:306px;height:28px"></div>
<svg style="left:1591px;top:283px" width="15" height="15" viewBox="0 0 16 16"><circle cx="8" cy="8" r="3.7" fill="none" stroke="#2b2b2b" stroke-width="2.8"/><circle cx="8" cy="8" r="5.6" fill="none" stroke="#2b2b2b" stroke-width="2.8" stroke-dasharray="2.4 1.998" transform="rotate(-14 8 8)"/></svg>
<div class="sep" style="left:1619px;top:282px;height:16px"></div>
<svg style="left:1628px;top:283px" width="15" height="14" viewBox="0 0 15 14"><path d="M9 3 V0.7 H0.7 V13.3 H9 V11" fill="none" stroke="#1e1e1e" stroke-width="1.3"/><path d="M4 7 H13 M10 3.8 L13.2 7 L10 10.2" fill="none" stroke="#1b6fa8" stroke-width="1.6"/></svg>
<div class="sep" style="left:1655px;top:282px;height:16px"></div>
<svg style="left:1664px;top:283px" width="14" height="14" viewBox="0 0 14 14"><circle cx="5.5" cy="5.5" r="4.3" fill="#e9eefb" stroke="#1e1e1e" stroke-width="1.2"/><path d="M3.3 5.5 H7.7 M5.5 3.3 V7.7" stroke="#1b6fa8" stroke-width="1.2"/><path d="M8.8 8.8 L13 13" stroke="#1e1e1e" stroke-width="1.8"/></svg>
<svg style="left:1692px;top:283px" width="14" height="14" viewBox="0 0 14 14"><circle cx="5.5" cy="5.5" r="4.3" fill="#e9eefb" stroke="#1e1e1e" stroke-width="1.2"/><path d="M3.3 5.5 H7.7" stroke="#1b6fa8" stroke-width="1.2"/><path d="M8.8 8.8 L13 13" stroke="#1e1e1e" stroke-width="1.8"/></svg>
<svg style="left:1718px;top:282px" width="15" height="16" viewBox="0 0 15 16"><path d="M3.200 15 V9 M6.800 15 V6 M10.400 15 V10 M14 15 V8" stroke="#5a5e6e" stroke-width="2"/><path d="M1.500 4.500 C2.500 6 5.500 5.500 5.500 3.200 C5.500 1 2.500 0.500 1.200 2 M0.800 0.300 V2.600 H3.200" fill="none" stroke="#5a5e6e" stroke-width="1.100"/></svg>
<div class="abs" style="left:1581px;top:304px;width:306px;height:504px;background:#f5f7fd"></div>
<div class="t" style="left:1591px;top:307px;font-weight:bold">诊断会话: 1:24 分钟</div>
<div class="abs" style="left:1581px;top:324px;width:306px;height:24px;background:#fff;border-top:1px solid #b8b8b8;border-bottom:1px solid #b8b8b8"></div>
<div class="abs" style="left:1613px;top:325px;width:5px;height:22px;background:#000"></div><div class="abs" style="left:1850px;top:325px;width:5px;height:22px;background:#000"></div>
<div class="abs" style="left:1652px;top:325px;width:1px;height:22px;background:#b8b8b8"></div>
<div class="abs" style="left:1778px;top:325px;width:1px;height:22px;background:#b8b8b8"></div>
<div class="abs" style="left:1627px;top:342px;width:1px;height:5px;background:#c8c8c8"></div>
<div class="abs" style="left:1677px;top:342px;width:1px;height:5px;background:#c8c8c8"></div>
<div class="abs" style="left:1703px;top:342px;width:1px;height:5px;background:#c8c8c8"></div>
<div class="abs" style="left:1728px;top:342px;width:1px;height:5px;background:#c8c8c8"></div>
<div class="abs" style="left:1753px;top:342px;width:1px;height:5px;background:#c8c8c8"></div>
<div class="abs" style="left:1803px;top:342px;width:1px;height:5px;background:#c8c8c8"></div>
<div class="abs" style="left:1829px;top:342px;width:1px;height:5px;background:#c8c8c8"></div>
<div class="t" style="left:1655px;top:324px;color:#444">1:10分钟</div><div class="t" style="left:1781px;top:324px;color:#444">1:20分钟</div>
<svg style="left:1587px;top:354px" width="7" height="7" viewBox="0 0 7 7"><path d="M6.5 0.5 V6.5 H0.5 Z" fill="#555"/></svg><div class="t" style="left:1598px;top:350px;font-weight:bold">事件</div>
<div class="abs" style="left:1617px;top:367px;width:234px;height:23px;background:#f5f7fd;border:1px solid #a8a8a8"></div><div class="abs" style="left:1652px;top:367px;width:1px;height:23px;background:#a8a8a8"></div><div class="abs" style="left:1778px;top:367px;width:1px;height:23px;background:#a8a8a8"></div>
<div class="abs" style="left:1600px;top:376px;width:3px;height:9px;background:#333"></div><div class="abs" style="left:1605px;top:376px;width:3px;height:9px;background:#333"></div>
<svg style="left:1587px;top:398px" width="7" height="7" viewBox="0 0 7 7"><path d="M6.5 0.5 V6.5 H0.5 Z" fill="#555"/></svg><div class="t" style="left:1598px;top:394px;font-weight:bold">进程内存 (MB)</div>
<svg style="left:1701px;top:396px" width="8" height="11" viewBox="0 0 8 11"><path d="M0.5 0.5 H7.5 V6 L5.5 10.5 H2.5 L0.5 6 Z" fill="#f0b429"/></svg><div class="t" style="left:1714px;top:394px;color:#333">G</div>
<svg style="left:1732px;top:396px" width="13" height="11" viewBox="0 0 13 11"><path d="M0.5 0.5 H12.5 L6.5 10.5 Z" fill="#1b78c8"/></svg><div class="t" style="left:1747px;top:394px;color:#333">快.</div>
<div class="abs" style="left:1770px;top:396px;width:11px;height:11px;border-radius:6px;background:#7fb0cf"></div><div class="t" style="left:1784px;top:394px;color:#333">专...</div>
<div class="abs" style="left:1617px;top:413px;width:234px;height:70px;background:#f5f7fd;border:1px solid #a8a8a8"></div><div class="abs" style="left:1652px;top:413px;width:1px;height:70px;background:#a8a8a8"></div><div class="abs" style="left:1778px;top:413px;width:1px;height:70px;background:#a8a8a8"></div>
<svg style="left:1618px;top:414px" width="232" height="68" viewBox="0 0 232 68"><path d="M0 9 L40 8.5 L100 8 L160 7 L218 6 V68 H0 Z" fill="#a3c8dd"/><path d="M34.5 0 V68 M160.500 0 V68" stroke="#8eb1c7" stroke-width="1"/><path d="M37.5 0 H42.5 V4 L41.2 8.5 H38.8 L37.5 4 Z" fill="#f0b429"/><path d="M85.5 0 H90.5 V4 L89.2 8.5 H86.8 L85.5 4 Z" fill="#f0b429"/><path d="M119.5 0 H124.5 V4 L123.2 8.5 H120.8 L119.5 4 Z" fill="#f0b429"/><path d="M140.5 0 H145.5 V4 L144.2 8.5 H141.8 L140.5 4 Z" fill="#f0b429"/><path d="M174.5 0 H179.5 V4 L178.2 8.5 H175.8 L174.5 4 Z" fill="#f0b429"/><path d="M183.5 0 H188.5 V4 L187.2 8.5 H184.8 L183.5 4 Z" fill="#f0b429"/></svg>
<div class="t" style="left:1591px;top:413px;color:#333">219</div><div class="t" style="left:1856px;top:413px;color:#333">219</div>
<div class="t" style="left:1605px;top:468px;color:#333">0</div><div class="t" style="left:1856px;top:468px;color:#333">0</div>
<svg style="left:1587px;top:489px" width="7" height="7" viewBox="0 0 7 7"><path d="M6.5 0.5 V6.5 H0.5 Z" fill="#555"/></svg><div class="t" style="left:1598px;top:485px;font-weight:bold">CPU (所有处理器的百分比)</div>
<div class="abs" style="left:1617px;top:502px;width:234px;height:70px;background:#f5f7fd;border:1px solid #a8a8a8"></div><div class="abs" style="left:1652px;top:502px;width:1px;height:70px;background:#a8a8a8"></div><div class="abs" style="left:1778px;top:502px;width:1px;height:70px;background:#a8a8a8"></div>
<svg style="left:1618px;top:503px" width="232" height="68" viewBox="0 0 232 68"><path d="M0 68 V67 L10 66.5 L20 67 L34 66.8 L42 66 L50 67 L80 67 L96 66.3 L110 67 L120 66 L126 64.5 L134 66 L145 66.5 L160 67 L170 66 L178 66.5 L186 66 L200 67 L210 66 L222 67 L232 67.5 V68 Z" fill="#bcd4e4" stroke="#8eb1c7" stroke-width="0.8"/></svg>
<div class="t" style="left:1591px;top:502px;color:#333">100</div><div class="t" style="left:1856px;top:502px;color:#333">100</div>
<div class="t" style="left:1605px;top:557px;color:#333">0</div><div class="t" style="left:1856px;top:557px;color:#333">0</div>
<div class="abs" style="left:1581px;top:593px;width:306px;height:3px;background:#d9dce6"></div>
<div class="abs" style="left:1581px;top:596px;width:306px;height:213px;background:#fff"></div>
<div class="abs" style="left:1657px;top:600px;width:72px;height:21px;background:#e3e8f7"></div>
<div class="t" style="left:1591px;top:603px">摘要</div>
<div class="t" style="left:1627px;top:603px">事件</div>
<div class="t" style="left:1663px;top:603px">内存使用率</div>
<div class="t" style="left:1735px;top:603px">CPU 使用率</div>
<div class="abs" style="left:1581px;top:620px;width:306px;height:29px;background:#dfe5f6"></div>
<div class="abs" style="left:1585px;top:624px;width:76px;height:21px;background:#c9d2ee"></div>
<div class="abs" style="left:1666px;top:624px;width:64px;height:21px;background:#d3daf1"></div>
<div class="abs" style="left:1735px;top:624px;width:52px;height:21px;background:#d3daf1"></div>
<svg style="left:1587px;top:627px" width="16" height="13" viewBox="0 0 16 13"><path d="M0.7 2.5 H4 L5 0.8 H11 L12 2.5 H15.3 V12.3 H0.7 Z" fill="none" stroke="#1e1e1e" stroke-width="1.2"/><circle cx="8" cy="7.2" r="3.2" fill="none" stroke="#1e1e1e" stroke-width="1.2"/></svg>
<div class="t" style="left:1606px;top:627px">截取快照</div>
<svg style="left:1669px;top:627px" width="14" height="14" viewBox="0 0 14 14"><circle cx="8.5" cy="5.5" r="4.3" fill="none" stroke="#a9b0c8" stroke-width="1.2"/><path d="M5.3 8.7 L1 13" stroke="#a9b0c8" stroke-width="1.6"/></svg><div class="t" style="left:1687px;top:627px;color:#9aa1bb">查看堆</div>
<svg style="left:1739px;top:628px" width="11" height="11" viewBox="0 0 11 11"><path d="M0.5 0.5 L10.5 10.5 M10.5 0.5 L0.5 10.5" stroke="#a9b0c8" stroke-width="1.2"/></svg><div class="t" style="left:1756px;top:627px;color:#9aa1bb">删除</div>
<div class="abs" style="left:1581px;top:649px;width:306px;height:26px;background:#f8f8fa;border-bottom:1px solid #e3e3e8;border-top:1px solid #e9e9ee"></div>
<div class="t" style="left:1585px;top:656px">ID</div>
<div class="t" style="left:1610px;top:656px">时间</div>
<div class="t" style="left:1643px;top:656px">对象(差异)</div>
<div class="t" style="left:1708px;top:656px">堆大小(差异)</div>
<div class="abs" style="left:1605px;top:650px;width:1px;height:24px;background:#e0e0e6"></div>
<div class="abs" style="left:1638px;top:650px;width:1px;height:24px;background:#e0e0e6"></div>
<div class="abs" style="left:1703px;top:650px;width:1px;height:24px;background:#e0e0e6"></div>
<div class="abs" style="left:1780px;top:650px;width:1px;height:24px;background:#e0e0e6"></div>
<!--AUTOS-->
<div class="ttl" style="left:33px;top:818px;width:919px;height:22px"><div class="t" style="left:4px;top:3px">自动窗口</div></div>
<div class="arr w" style="left:900px;top:829px;border-left-width:4px;border-right-width:4px;border-top-width:4px;border-top-color:#d6dcf0"></div><svg style="left:917px;top:823px" width="9" height="13" viewBox="0 0 9 13"><path d="M2.5 0.5 H6.5 V6.5 H2.5 Z M0.5 6.5 H8.5 M4.5 6.5 V12" fill="none" stroke="#d6dcf0" stroke-width="1"/><path d="M6 0.5 V6.5" stroke="#d6dcf0" stroke-width="1.6"/></svg><svg style="left:935px;top:825px" width="9" height="9" viewBox="0 0 9 9"><path d="M0.5 0.5 L8.5 8.5 M8.5 0.5 L0.5 8.5" stroke="#d6dcf0" stroke-width="1.3"/></svg>
<div class="lt" style="left:33px;top:840px;width:919px;height:26px"></div>
<div class="abs" style="left:33px;top:841px;width:225px;height:22px;background:#fff;border:1px solid #aab3d3"><div class="t" style="left:4px;top:2px;color:#6d6d6d">搜索(Ctrl+E)</div><svg style="left:196px;top:3px" width="14" height="14" viewBox="0 0 14 14"><circle cx="8.5" cy="5.2" r="3.8" fill="none" stroke="#1e1e1e" stroke-width="1.5"/><path d="M5.8 8 L1 12.8" stroke="#1e1e1e" stroke-width="1.8"/></svg><div class="abs" style="left:211px;top:0;width:1px;height:21px;background:#aab3d3"></div><div class="arr" style="left:215px;top:9px"></div></div>
<svg style="left:266px;top:848px" width="13" height="10" viewBox="0 0 13 10"><path d="M12.5 5 H1 M5 1 L1 5 L5 9" fill="none" stroke="#a9b1cc" stroke-width="1.1"/></svg><svg style="left:289px;top:848px" width="13" height="10" viewBox="0 0 13 10"><path d="M0.5 5 H12 M8 1 L12 5 L8 9" fill="none" stroke="#a9b1cc" stroke-width="1.1"/></svg>
<div class="t g" style="left:309px;top:846px">搜索深度:</div>
<div class="combo dis" style="left:366px;top:843px;width:40px;height:20px"><div class="arr g" style="left:29px;top:8px"></div></div>
<div class="wh" style="left:33px;top:866px;width:919px;height:121px"></div>
<div class="abs" style="left:33px;top:887px;width:903px;height:1px;background:#eceef4"></div>
<div class="t" style="left:47px;top:869px;color:#b9b9b9">名称</div>
<div class="t" style="left:345px;top:869px;color:#b9b9b9">值</div>
<div class="t" style="left:791px;top:869px;color:#b9b9b9">类型</div>
<div class="abs" style="left:41px;top:867px;width:1px;height:20px;background:#eceef4"></div>
<div class="abs" style="left:340px;top:867px;width:1px;height:20px;background:#eceef4"></div>
<div class="abs" style="left:786px;top:867px;width:1px;height:20px;background:#eceef4"></div>
<div class="abs" style="left:936px;top:866px;width:16px;height:121px;background:#f5f5f5"></div>
<div class="arr" style="left:940px;top:872px;border-top:0;border-bottom:4px solid #c8c8c8;border-left-width:4px;border-right-width:4px"></div><div class="arr" style="left:940px;top:976px;border-top:4px solid #c8c8c8;border-left-width:4px;border-right-width:4px"></div>
<div class="wh" style="left:33px;top:986px;width:58px;height:22px"><div class="t" style="left:5px;top:5px">自动窗口</div></div>
<div class="ttl" style="left:93px;top:989px;width:58px;height:19px"><div class="t" style="left:5px;top:2px;color:#e8ecf8">局部变量</div></div>
<div class="ttl" style="left:153px;top:989px;width:45px;height:19px"><div class="t" style="left:5px;top:2px;color:#e8ecf8">监视 1</div></div>
<!--ERRORS-->
<div class="ttl" style="left:960px;top:818px;width:927px;height:22px"><div class="t" style="left:5px;top:3px">错误列表</div></div>
<div class="arr w" style="left:1834px;top:829px;border-left-width:4px;border-right-width:4px;border-top-width:4px;border-top-color:#d6dcf0"></div><svg style="left:1851px;top:823px" width="9" height="13" viewBox="0 0 9 13"><path d="M2.5 0.5 H6.5 V6.5 H2.5 Z M0.5 6.5 H8.5 M4.5 6.5 V12" fill="none" stroke="#d6dcf0" stroke-width="1"/><path d="M6 0.5 V6.5" stroke="#d6dcf0" stroke-width="1.6"/></svg><svg style="left:1869px;top:825px" width="9" height="9" viewBox="0 0 9 9"><path d="M0.5 0.5 L8.5 8.5 M8.5 0.5 L0.5 8.5" stroke="#d6dcf0" stroke-width="1.3"/></svg>
<div class="lt" style="left:960px;top:840px;width:927px;height:26px"></div>
<div class="combo" style="left:968px;top:843px;width:150px;height:20px"><div class="t" style="left:3px;top:1px">整个解决方案</div><div class="arr" style="left:139px;top:8px"></div></div>
<div class="sep" style="left:1123px;top:844px;height:18px"></div>
<div class="abs" style="left:1129px;top:842px;width:66px;height:22px;background:#fbe7b6;border:1px solid #dcae4a"></div>
<svg style="left:1132px;top:846px" width="14" height="14" viewBox="0 0 14 14"><circle cx="7" cy="7" r="6.5" fill="#d8323c"/><path d="M4.2 4.2 L9.8 9.8 M9.8 4.2 L4.2 9.8" stroke="#fff" stroke-width="1.6"/></svg><div class="t" style="left:1152px;top:846px;word-spacing:1px">错误 0</div>
<div class="sep" style="left:1199px;top:844px;height:18px"></div>
<svg style="left:1206px;top:846px" width="15" height="14" viewBox="0 0 15 14"><path d="M7.5 0.8 L14.3 13.2 H0.7 Z" fill="#8a6a1f" stroke="#8a6a1f" stroke-linejoin="round"/><path d="M7.5 4.5 V9 M7.5 10.3 V12" stroke="#fff" stroke-width="1.5"/></svg><div class="t" style="left:1226px;top:846px;word-spacing:1px">展示 1 个警告中的 0 个</div>
<div class="sep" style="left:1363px;top:844px;height:18px"></div>
<svg style="left:1372px;top:846px" width="14" height="14" viewBox="0 0 14 14"><circle cx="7" cy="7" r="6.5" fill="#1a5fb4"/><path d="M7 6 V10.5" stroke="#fff" stroke-width="1.7"/><circle cx="7" cy="3.8" r="1" fill="#fff"/></svg><div class="t" style="left:1391px;top:846px;word-spacing:1px">展示 10 个消息中的 0 个</div>
<div class="sep" style="left:1534px;top:844px;height:18px"></div>
<div class="abs" style="left:1540px;top:842px;width:21px;height:22px;background:#fbe7b6;border:1px solid #dcae4a"></div><svg style="left:1542px;top:845px" width="17" height="17" viewBox="0 0 17 17"><circle cx="4.500" cy="4.500" r="3.6" fill="none" stroke="#d8323c" stroke-width="1.6"/><path d="M7 6.500 H16 L12.500 10.500 V15.500 H10.500 V10.500 Z" fill="#fbe7b6" stroke="#1e1e1e" stroke-width="1.1" stroke-linejoin="round"/></svg>
<div class="sep" style="left:1566px;top:844px;height:18px"></div>
<div class="combo" style="left:1573px;top:843px;width:150px;height:20px"><div class="t" style="left:3px;top:1px;word-spacing:1.5px;letter-spacing:0.25px">生成 + IntelliSense</div><div class="arr" style="left:139px;top:8px"></div></div>
<div class="abs" style="left:1730px;top:841px;width:156px;height:22px;background:#fff;border:1px solid #aab3d3"><div class="t" style="left:4px;top:2px;color:#8a8a8a">搜索错误列表</div><svg style="left:127px;top:3px" width="14" height="14" viewBox="0 0 14 14"><circle cx="8.5" cy="5.2" r="3.8" fill="none" stroke="#1e1e1e" stroke-width="1.5"/><path d="M5.8 8 L1 12.8" stroke="#1e1e1e" stroke-width="1.8"/></svg><div class="abs" style="left:143px;top:0;width:1px;height:21px;background:#aab3d3"></div><div class="arr" style="left:146px;top:9px"></div></div>
<div class="wh" style="left:960px;top:866px;width:927px;height:121px"></div>
<div class="abs" style="left:962px;top:888px;width:924px;height:1px;background:#dcdfe8"></div>
<div class="t" style="left:1018px;top:870px">代码</div>
<div class="t" style="left:1068px;top:870px">说明</div>
<div class="t" style="left:1406px;top:870px">项目</div>
<div class="t" style="left:1556px;top:870px">文件</div>
<div class="t" style="left:1706px;top:870px">行</div>
<div class="t" style="left:1741px;top:870px">禁止显示状态</div>
<div class="arr" style="left:1101px;top:875px;border-left-width:4px;border-right-width:4px;border-top-width:4px"></div>
<svg style="left:1003px;top:869px" width="7" height="6" viewBox="0 0 7 6"><path d="M0 0.5 H6 M1 2.5 H5 M3.5 2 V5.5 M5.5 1 V5" stroke="#555" stroke-width="0.9"/></svg>
<div class="abs" style="left:988px;top:867px;width:1px;height:21px;background:#e6e8ef"></div>
<div class="abs" style="left:1013px;top:867px;width:1px;height:21px;background:#e6e8ef"></div>
<div class="abs" style="left:1063px;top:867px;width:1px;height:21px;background:#e6e8ef"></div>
<div class="abs" style="left:1402px;top:867px;width:1px;height:21px;background:#e6e8ef"></div>
<div class="abs" style="left:1552px;top:867px;width:1px;height:21px;background:#e6e8ef"></div>
<div class="abs" style="left:1702px;top:867px;width:1px;height:21px;background:#e6e8ef"></div>
<div class="abs" style="left:1737px;top:867px;width:1px;height:21px;background:#e6e8ef"></div>
<div class="abs" style="left:1862px;top:867px;width:1px;height:21px;background:#e6e8ef"></div>
<div class="abs" style="left:1885px;top:867px;width:1px;height:21px;background:#e6e8ef"></div>
<div class="ttl" style="left:962px;top:989px;width:93px;height:19px"><div class="t" style="left:4px;top:2px;color:#e8ecf8">辅助功能检查器</div></div>
<div class="ttl" style="left:1058px;top:989px;width:95px;height:19px"><div class="t" style="left:4px;top:2px;color:#e8ecf8">XAML 绑定失败</div></div>
<div class="ttl" style="left:1156px;top:989px;width:57px;height:19px"><div class="t" style="left:4px;top:2px;color:#e8ecf8">调用堆栈</div></div>
<div class="ttl" style="left:1216px;top:989px;width:33px;height:19px"><div class="t" style="left:4px;top:2px;color:#e8ecf8">断点</div></div>
<div class="ttl" style="left:1252px;top:989px;width:57px;height:19px"><div class="t" style="left:4px;top:2px;color:#e8ecf8">异常设置</div></div>
<div class="ttl" style="left:1312px;top:989px;width:57px;height:19px"><div class="t" style="left:4px;top:2px;color:#e8ecf8">命令窗口</div></div>
<div class="ttl" style="left:1372px;top:989px;width:57px;height:19px"><div class="t" style="left:4px;top:2px;color:#e8ecf8">即时窗口</div></div>
<div class="ttl" style="left:1432px;top:989px;width:33px;height:19px"><div class="t" style="left:4px;top:2px;color:#e8ecf8">输出</div></div>
<div class="wh" style="left:1467px;top:986px;width:58px;height:22px"><div class="t" style="left:5px;top:5px">错误列表</div></div>
<!--RIGHTSTRIP-->
<div class="abs" style="left:1893px;top:99px;width:16px;height:109px"><div style="position:absolute;left:16px;top:0;transform-origin:0 0;transform:rotate(90deg);white-space:nowrap;line-height:16px;height:16px;color:#fff">解决方案资源管理器</div></div>
<div class="abs" style="left:1914px;top:99px;width:6px;height:109px;background:#40568d"></div>
<div class="abs" style="left:1893px;top:220px;width:16px;height:43px"><div style="position:absolute;left:16px;top:0;transform-origin:0 0;transform:rotate(90deg);white-space:nowrap;line-height:16px;height:16px;color:#fff">Git 更改</div></div>
<div class="abs" style="left:1914px;top:220px;width:6px;height:43px;background:#40568d"></div>
<div class="abs" style="left:1893px;top:274px;width:16px;height:109px"><div style="position:absolute;left:16px;top:0;transform-origin:0 0;transform:rotate(90deg);white-space:nowrap;line-height:16px;height:16px;color:#fff">实时属性资源管理器</div></div>
<div class="abs" style="left:1914px;top:274px;width:6px;height:109px;background:#40568d"></div>
<div class="abs" style="left:1893px;top:396px;width:16px;height:86px"><div style="position:absolute;left:16px;top:0;transform-origin:0 0;transform:rotate(90deg);white-space:nowrap;line-height:16px;height:16px;color:#fff">XAML 实时预览</div></div>
<div class="abs" style="left:1914px;top:396px;width:6px;height:86px;background:#40568d"></div>
<!--STATUS-->
<div class="abs" style="left:0;top:1014px;width:1920px;height:1px;background:#7f5d70"></div><div class="abs" style="left:0;top:1015px;width:1920px;height:25px;background:#a34e43"></div>
<svg style="left:4px;top:1019px" width="16" height="16" viewBox="0 0 16 16"><path d="M0.7 0.7 H15.3 V11.3 H9.5 L7 14.5 V11.3 H0.7 Z" fill="none" stroke="#fff" stroke-width="1.2"/></svg>
<div class="t w" style="left:27px;top:1020px">就绪</div>
<svg style="left:1572px;top:1020px" width="14" height="14" viewBox="0 0 14 14"><path d="M4 13 V1 M1.5 3.5 L4 1 L6.5 3.5 M10 1 V13 M7.5 10.5 L10 13 L12.5 10.5" fill="none" stroke="#fff" stroke-width="1.1"/></svg>
<div class="t w" style="left:1592px;top:1020px;font-size:13px">0 / 0</div><div class="arr" style="left:1627px;top:1024px;border-top:0;border-bottom:4px solid #fff;border-left-width:4px;border-right-width:4px"></div>
<svg style="left:1657px;top:1020px" width="14" height="14" viewBox="0 0 14 14"><path d="M1 13 L2 9.5 L10.5 1 L13 3.5 L4.5 12 Z" fill="none" stroke="#fff" stroke-width="1.1"/></svg><div class="t w" style="left:1678px;top:1020px;font-size:13px">1</div>
<svg style="left:1708px;top:1019px" width="13" height="16" viewBox="0 0 13 16"><circle cx="3" cy="3" r="2" fill="none" stroke="#fff" stroke-width="1.1"/><circle cx="3" cy="13" r="2" fill="none" stroke="#fff" stroke-width="1.1"/><circle cx="10" cy="4.5" r="2" fill="none" stroke="#fff" stroke-width="1.1"/><path d="M3 5 V11 M10 6.5 C10 9 3.5 8.5 3 11" fill="none" stroke="#fff" stroke-width="1.1"/></svg>
<div class="t w" style="left:1729px;top:1020px;font-size:13px">main</div><div class="arr" style="left:1763px;top:1024px;border-top:0;border-bottom:4px solid #fff;border-left-width:4px;border-right-width:4px"></div>
<svg style="left:1800px;top:1020px" width="16" height="15" viewBox="0 0 16 15"><path d="M1 1 H13 V4 H1 Z M2.5 4 V12.5 H7" fill="none" stroke="#fff" stroke-width="1.1"/><path d="M5 6.5 H11 M5 9 H8" stroke="#fff"/><circle cx="11.5" cy="10.5" r="4" fill="#fff"/><path d="M11.5 8.5 V12.5 M9.8 10.2 L11.5 8.4 L13.2 10.2" fill="none" stroke="#a34e43" stroke-width="1.1"/></svg>
<div class="t w" style="left:1821px;top:1020px;font-size:13px">VPet</div><div class="arr" style="left:1853px;top:1024px;border-top:0;border-bottom:4px solid #fff;border-left-width:4px;border-right-width:4px"></div>
<svg style="left:1883px;top:1018px" width="18" height="18" viewBox="0 0 18 18"><path d="M2 13 C4 11 3 7 4.5 4.5 C6 2 10 2 11.5 4.5 C12.5 6.5 12 9 12.5 10.5" fill="none" stroke="#fff" stroke-width="1.2"/><path d="M2 13 H8" stroke="#fff" stroke-width="1.2"/><path d="M6 15 H9" stroke="#fff" stroke-width="1.2"/><circle cx="12.5" cy="12.5" r="4.5" fill="#fff"/><path d="M12.7 10 V15 M11.5 11 L12.7 10" stroke="#a34e43" stroke-width="1.2" fill="none"/></svg>
<!--PET-->
<style>.pf{font-family:"Liberation Sans",sans-serif;font-size:13px;letter-spacing:-0.2px}.bar{position:absolute;left:214px;width:143px;height:10px;border-radius:5px;background:#ebebeb;overflow:hidden}.bar i{position:absolute;left:0;top:0;height:10px;display:block}.bar b{position:absolute;left:0;top:0;width:143px;text-align:center;font-weight:normal;font-size:11px;line-height:11px;color:#fff;letter-spacing:-0.3px}.bl{background:#1e9be6}.gn{background:#a5c86a}.stb{background-image:repeating-linear-gradient(115deg,rgba(255,255,255,0) 0 2px,rgba(255,255,255,.28) 2px 3.5px)}</style>
<svg style="left:255px;top:150px" width="80" height="40" viewBox="255 150 80 40"><path d="M270 168 C266 176 268 181 276 181 C284 179 292 178 298 182" fill="none" stroke="#3a3a40" stroke-width="5.5"/><path d="M270 168 C266 176 268 181 276 181 C284 179 292 178 298 182" fill="none" stroke="#bdbdc0" stroke-width="3.2"/><rect x="263.500" y="156.500" width="35" height="12" fill="#d3d7f2" stroke="#2b2f55" stroke-width="1"/><path d="M269 161 H293 M269 163.500 H293" stroke="#3a4180" stroke-width="0.9"/></svg>
<svg style="left:230px;top:212px" width="105" height="35" viewBox="0 0 1920 640"><defs><clipPath id="pc"><rect x="160" y="100" width="1585" height="462"/></clipPath></defs><g clip-path="url(#pc)"><rect x="165" y="100" width="1570" height="470" fill="#c5c5c8"/><path d="M470 120 L640 100 H1290 L1255 250 L1200 400 L1330 470 L1365 570 H380 L470 490 L435 330 Z" fill="#f8f2ef"/><path d="M480 160 L600 100 L700 100 L760 210 L700 180 L560 180 Z" fill="#f0d4cf"/><path d="M690 100 L760 210 L850 385 L885 300 L955 365 L965 190 L1010 100 Z" fill="#c5c5c8"/><path d="M700 120 L760 210 L850 385 L885 300 L955 365 L965 190 L1000 120" fill="none" stroke="#241a1a" stroke-width="11" stroke-linejoin="miter"/><path d="M250 100 L262 300 L330 470 L385 545 L400 480 L475 505 L432 330 L470 170 L540 110" fill="none" stroke="#241a1a" stroke-width="10"/><path d="M172 100 V570 M243 100 V570" stroke="#241a1a" stroke-width="13"/><path d="M1275 110 L1250 250 L1200 400 L1160 440 L1240 410 L1225 460 L1335 470 L1365 570" fill="none" stroke="#241a1a" stroke-width="10"/><path d="M1470 100 V210 C1460 330 1400 420 1335 470" fill="none" stroke="#241a1a" stroke-width="10"/><path d="M1728 100 V570" stroke="#241a1a" stroke-width="14"/><path d="M1580 270 L1600 570" stroke="#241a1a" stroke-width="9"/><path d="M1490 255 V190 H1545 V100 H1720 V255 Z" fill="#a5623a"/><path d="M1545 100 V165 H1640 V140 H1700" fill="none" stroke="#5a3015" stroke-width="10"/><path d="M1545 100 H1640 V140 H1545 Z" fill="#d9c8b8"/><ellipse cx="615" cy="322" rx="78" ry="108" fill="#f7cf70" stroke="#241a1a" stroke-width="13"/><ellipse cx="600" cy="270" rx="40" ry="50" fill="#fbe7b0"/><path d="M505 300 C510 200 640 150 725 250" fill="none" stroke="#241a1a" stroke-width="26"/><ellipse cx="1120" cy="258" rx="82" ry="100" fill="#f7cf70" stroke="#241a1a" stroke-width="13"/><ellipse cx="1110" cy="210" rx="40" ry="45" fill="#fbe7b0"/><path d="M1010 180 C1060 110 1190 100 1240 190" fill="none" stroke="#241a1a" stroke-width="24"/><path d="M785 522 L940 485 L980 570 H800 Z" fill="#c76b7b" stroke="#241a1a" stroke-width="10"/></g></svg>
<div class="abs" style="left:159px;top:181px;width:244px;height:37px;background:#aee1fb;border:1.5px solid #8fd3f5;border-radius:4px;box-shadow:0 0 0 0.5px #c8ecfc"></div>
<div class="abs" style="left:163px;top:186px;width:187px;height:22px;background:#fff;border:1.5px solid #3fb0e3;border-radius:4px"><div class="t" style="left:5px;top:2px;font-size:15.5px;color:#dcdcdc;letter-spacing:0.4px">Said with desktop pet</div></div>
<div class="abs" style="left:352px;top:186px;width:47px;height:22px;background:#9fd3f8;border:1.5px solid #3fb0e3;border-radius:3px"><div class="t" style="left:0;width:44px;text-align:center;top:1.5px;font-size:15.5px;color:#1a2a3a;letter-spacing:-0.2px">Send</div></div>
<div class="abs" style="left:163px;top:209px;width:236px;height:6px;background:#63c3f8;border:1px solid #3fb0e3;border-radius:3px"></div>
<div class="abs" style="left:156px;top:242px;width:250px;height:136px;background:#fff;border:1.5px solid #bfe3f5;border-radius:4px"></div>
<div class="abs" style="left:156px;top:379px;width:250px;height:27px;background:#fff;border:1.5px solid #bfe3f5;border-radius:3px"></div>
<div class="abs" style="left:207px;top:380px;width:49px;height:25px;background:#cbe4f9"></div>
<div class="t pf" style="left:164px;top:250px;color:#4aa3da">Lv 7</div>
<div class="t pf" style="left:164px;top:280px;color:#222">Money</div>
<div class="t pf" style="left:164px;top:295px;color:#222">EXP</div>
<div class="t pf" style="left:164px;top:310px;color:#222">Stamina</div>
<div class="t pf" style="left:164px;top:325px;color:#222">Mood</div>
<div class="t pf" style="left:164px;top:340px;color:#222">Hunger</div>
<div class="t pf" style="left:164px;top:355px;color:#222">Thirst</div>
<div class="t pf" style="left:214px;top:281px;color:#3f9fd8">$ 82,453.15</div>
<div class="bar" style="top:298px"><i class="bl stb" style="width:113px"></i><b>3872.78 / 4900</b></div>
<div class="bar" style="top:313px"><i class="bl stb" style="width:125px"></i><b>86.95 / 100</b></div>
<div class="bar" style="top:328px"><i class="gn stb" style="width:143px"></i><b>99.71 / 100</b></div>
<div class="bar" style="top:343px"><i class="gn" style="width:117px"></i><b>81.76 / 100</b></div>
<div class="bar" style="top:358px"><i class="gn" style="width:143px"></i><b>99.90 / 100</b></div>
<div class="t pf" style="left:340px;width:58px;letter-spacing:0.25px;text-align:right;top:296px;color:#3f9fd8">x1.0</div>
<div class="t pf" style="left:340px;width:58px;letter-spacing:0.25px;text-align:right;top:311px;color:#3f9fd8">0.22/t</div>
<div class="t pf" style="left:340px;width:58px;letter-spacing:0.25px;text-align:right;top:326px;color:#3f9fd8">-0.05/t</div>
<div class="t pf" style="left:340px;width:58px;letter-spacing:0.25px;text-align:right;top:341px;color:#3f9fd8">-0.19/t</div>
<div class="t pf" style="left:340px;width:58px;letter-spacing:0.25px;text-align:right;top:356px;color:#3f9fd8">0.51/t</div>
<div class="t pf" style="left:167px;top:385px;color:#333">Feed</div>
<div class="t pf" style="left:215px;top:385px;color:#3f9fd8">Panel</div>
<div class="t pf" style="left:259px;top:385px;color:#333">Interact</div>
<div class="t pf" style="left:321px;top:385px;color:#333">DIY</div>
<div class="t pf" style="left:359px;top:385px;color:#333">System</div>
</body>
</html>
